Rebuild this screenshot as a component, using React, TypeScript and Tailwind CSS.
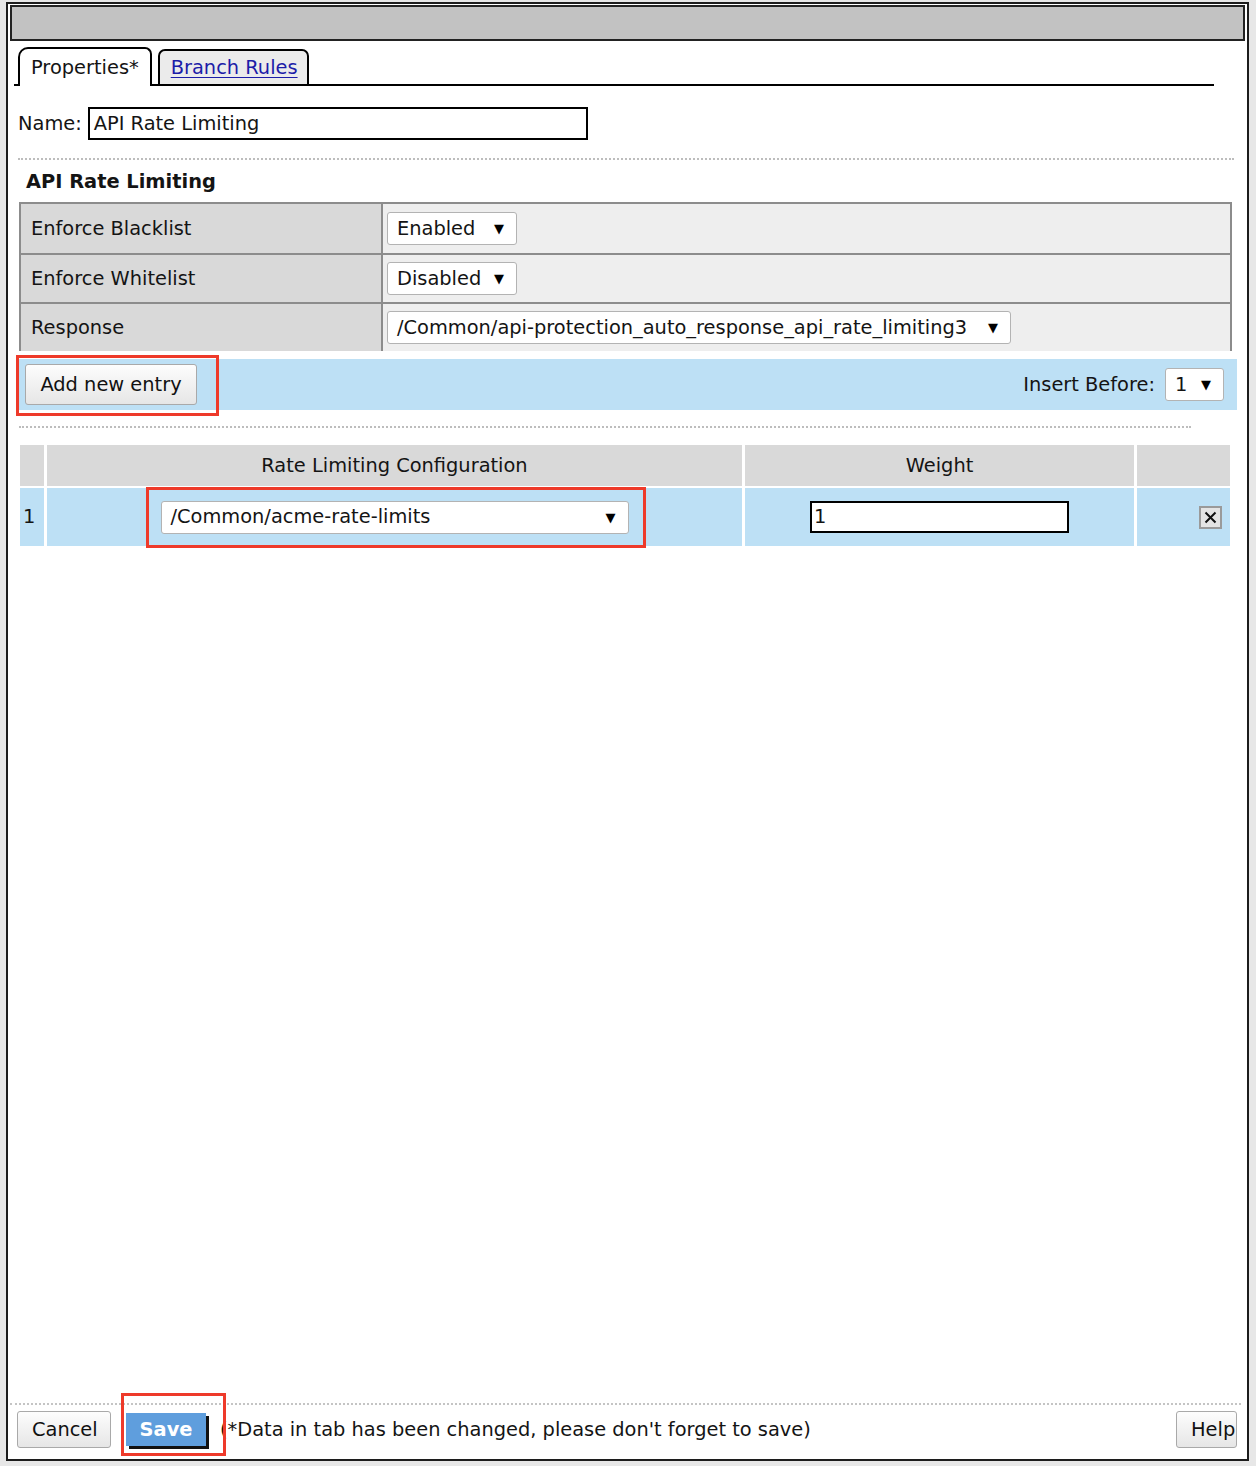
import React from "react";

// Small native-looking dropdown with the black triangle on the right
function SelectBox({
  value,
  width,
  gap = "justify-between",
}: {
  value: string;
  width: string;
  gap?: string;
}) {
  return (
    <div
      className={`${width} h-[33px] bg-white border border-[#b3b3b3] rounded-[3px] flex items-center ${gap} pl-[9px] pr-[12px]`}
    >
      <span className="whitespace-nowrap">{value}</span>
      <span className="text-[13px] leading-none text-black">▼</span>
    </div>
  );
}

function Highlight({ className }: { className: string }) {
  return (
    <div
      className={`absolute border-[3px] border-[#ee3a2a] pointer-events-none ${className}`}
    />
  );
}

function GrayButton({
  label,
  className = "",
}: {
  label: string;
  className?: string;
}) {
  return (
    <button
      type="button"
      className={`h-[37px] px-[14px] whitespace-nowrap bg-gradient-to-b from-[#fdfdfd] to-[#e6e6e6] border border-[#a9a9a9] rounded-[3px] text-[#111] ${className}`}
    >
      {label}
    </button>
  );
}

const settings = [
  { label: "Enforce Blacklist", value: "Enabled", w: "w-[130px]" },
  { label: "Enforce Whitelist", value: "Disabled", w: "w-[130px]" },
  {
    label: "Response",
    value: "/Common/api-protection_auto_response_api_rate_limiting3",
    w: "w-[624px]",
  },
];

export default function App() {
  return (
    <div className="w-[1256px] h-[1466px] bg-[#e7e7e7] pl-[6px] pr-[7px] pt-[2px] pb-[5px] font-['DejaVu_Sans','Liberation_Sans',sans-serif] text-[19.4px] text-[#141414]">
      <div className="h-full flex flex-col bg-white border-2 border-[#1c1c1c] px-[2px]">
        {/* title bar */}
        <div className="mt-[1px] h-[36px] shrink-0 bg-[#c2c2c2] border-2 border-[#222]" />

        {/* tabs */}
        <div className="mt-[6px] ml-[4px] w-[1200px] flex items-end">
          <div className="w-[4px] h-[2px] bg-black" />
          <div className="h-[39px] px-[11px] flex items-center border-2 border-b-0 border-black rounded-tl-[10px] rounded-tr-[7px] bg-white">
            Properties*
          </div>
          <div className="w-[6px] h-[2px] bg-black" />
          <div className="h-[37px] pl-[11px] pr-[9px] flex items-center border-2 border-black rounded-t-[7px] bg-[#ebebeb]">
            <span className="text-[#1c1ca8] underline underline-offset-[3px]">
              Branch Rules
            </span>
          </div>
          <div className="flex-1 h-[2px] bg-black" />
        </div>

        {/* name */}
        <div className="mt-[21px] ml-[8px] flex items-center gap-[6px]">
          <span>Name:</span>
          <div className="w-[500px] h-[33px] border-2 border-black flex items-center px-[4px]">
            API Rate Limiting
          </div>
        </div>

        <div className="mt-[18px] ml-[8px] mr-[11px] border-t-2 border-dotted border-[#bdbdbd]" />

        <div className="mt-[9px] ml-[16px] font-bold leading-[26px]">
          API Rate Limiting
        </div>

        {/* settings table */}
        <div className="mt-[7px] ml-[9px] w-[1213px] border-l-2 border-r-2 border-t-2 border-[#8c8c8c]">
          {settings.map((s, i) => (
            <div
              key={s.label}
              className={`flex h-[49px] ${i > 0 ? "border-t-2 border-[#8c8c8c]" : ""}`}
            >
              <div className="w-[362px] shrink-0 bg-[#d9d9d9] border-r-2 border-[#8c8c8c] flex items-center pl-[10px]">
                {s.label}
              </div>
              <div className="flex-1 bg-[#eeeeee] flex items-center pl-[4px]">
                <SelectBox value={s.value} width={s.w} />
              </div>
            </div>
          ))}
        </div>

        {/* add entry bar */}
        <div className="mt-[8px] ml-[9px] w-[1218px] h-[51px] bg-[#bde0f5] flex items-center justify-between pl-[6px] pr-[13px]">
          <div className="relative">
            <GrayButton label="Add new entry" className="h-[41px] w-[172px] px-0" />
            <Highlight className="-left-[9px] -top-[9px] -right-[22px] -bottom-[11px]" />
          </div>
          <div className="flex items-center gap-[10px]">
            <span>Insert Before:</span>
            <SelectBox value="1" width="w-[59px]" />
          </div>
        </div>

        <div className="mt-[16px] ml-[9px] w-[1172px] border-t-2 border-dotted border-[#bdbdbd]" />

        {/* entries table */}
        <div className="mt-[17px] ml-[10px] grid grid-cols-[24px_695px_389px_93px] gap-x-[3px] gap-y-[2px]">
          <div className="h-[41px] bg-[#d9d9d9]" />
          <div className="h-[41px] bg-[#d9d9d9] flex items-center justify-center">
            Rate Limiting Configuration
          </div>
          <div className="h-[41px] bg-[#d9d9d9] flex items-center justify-center">
            Weight
          </div>
          <div className="h-[41px] bg-[#d9d9d9]" />

          <div className="h-[58px] bg-[#bde0f5] flex items-center pl-[3px]">1</div>
          <div className="h-[58px] bg-[#bde0f5] flex items-center justify-center">
            <div className="relative">
              <SelectBox value="/Common/acme-rate-limits" width="w-[468px]" />
              <Highlight className="-left-[15px] -top-[14px] -right-[17px] -bottom-[14px]" />
            </div>
          </div>
          <div className="h-[58px] bg-[#bde0f5] flex items-center justify-center">
            <div className="w-[259px] h-[32px] bg-white border-2 border-black flex items-center pl-[2px]">
              1
            </div>
          </div>
          <div className="h-[58px] bg-[#bde0f5] flex items-center justify-end pr-[8px]">
            <div className="w-[23px] h-[23px] bg-[#e4e4e4] border-2 border-[#9a9a9a] flex items-center justify-center">
              <svg width="13" height="13" viewBox="0 0 13 13">
                <path d="M1.5 1.5 L11.5 11.5 M11.5 1.5 L1.5 11.5" stroke="#111" strokeWidth="2" />
              </svg>
            </div>
          </div>
        </div>

        <div className="flex-1" />

        {/* footer */}
        <div className="border-t-2 border-dotted border-[#c4c4c4] mr-[4px]" />
        <div className="flex items-center pt-[6px] pb-[11px] pr-[8px]">
          <GrayButton label="Cancel" className="ml-[7px] w-[94px] px-0" />
          <div className="relative ml-[15px]">
            <button
              type="button"
              className="w-[80px] h-[33px] bg-[#5f9edd] text-white font-bold shadow-[3px_3px_0_#111] flex items-center justify-center"
            >
              Save
            </button>
            <Highlight className="-left-[5px] -top-[20px] -right-[20px] -bottom-[10px]" />
          </div>
          <span className="ml-[14px] whitespace-nowrap">
            (*Data in tab has been changed, please don't forget to save)
          </span>
          <div className="flex-1" />
          <GrayButton label="Help" className="w-[61px] px-0" />
        </div>
      </div>
    </div>
  );
}
